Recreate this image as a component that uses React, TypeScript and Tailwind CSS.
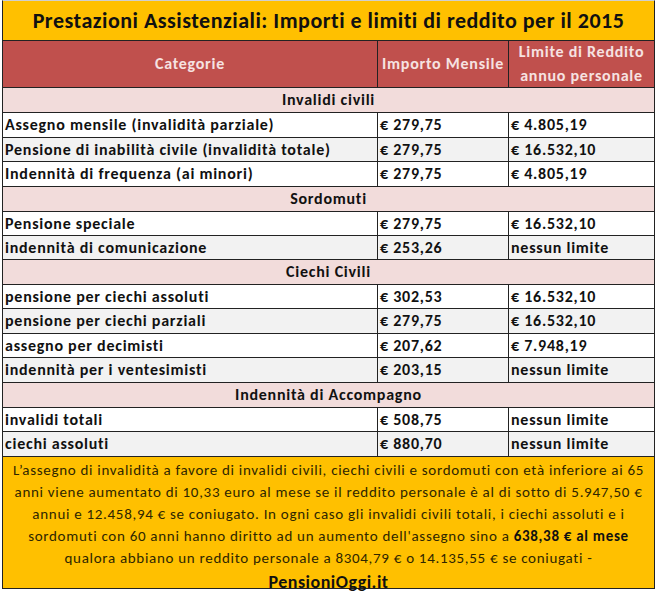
import React from "react";

type Row =
  | { kind: "section"; label: string; h: number }
  | { kind: "data"; a: string; b: string; c: string; h: number; gray: boolean };

const rows: Row[] = [
  { kind: "section", label: "Invalidi civili", h: 24 },
  { kind: "data", a: "Assegno mensile (invalidità parziale)", b: "€ 279,75", c: "€ 4.805,19", h: 24, gray: false },
  { kind: "data", a: "Pensione di inabilità civile (invalidità totale)", b: "€ 279,75", c: "€ 16.532,10", h: 23, gray: true },
  { kind: "data", a: "Indennità di frequenza (ai minori)", b: "€ 279,75", c: "€ 4.805,19", h: 24, gray: false },
  { kind: "section", label: "Sordomuti", h: 24 },
  { kind: "data", a: "Pensione speciale", b: "€ 279,75", c: "€ 16.532,10", h: 23, gray: false },
  { kind: "data", a: "indennità di comunicazione", b: "€ 253,26", c: "nessun limite", h: 23, gray: true },
  { kind: "section", label: "Ciechi Civili", h: 24 },
  { kind: "data", a: "pensione per ciechi assoluti", b: "€ 302,53", c: "€ 16.532,10", h: 23, gray: false },
  { kind: "data", a: "pensione per ciechi parziali", b: "€ 279,75", c: "€ 16.532,10", h: 24, gray: true },
  { kind: "data", a: "assegno per decimisti", b: "€ 207,62", c: "€ 7.948,19", h: 23, gray: false },
  { kind: "data", a: "indennità per i ventesimisti", b: "€ 203,15", c: "nessun limite", h: 24, gray: true },
  { kind: "section", label: "Indennità di Accompagno", h: 24 },
  { kind: "data", a: "invalidi totali", b: "€ 508,75", c: "nessun limite", h: 23, gray: false },
  { kind: "data", a: "ciechi assoluti", b: "€ 880,70", c: "nessun limite", h: 24, gray: true },
];

const font = { fontFamily: '"Carlito", "Lato", "Liberation Sans", sans-serif' };

export default function App() {
  return (
    <div className="w-[659px] h-[594px] bg-white pl-[2px]" style={font}>
      <div className="w-[653px] border-x border-b border-t border-x-[#222] border-b-[#222] border-t-[#cfcfcf] bg-white">
        <div className="h-[40px] bg-[#FFC000] border-b border-[#222] flex items-center justify-center text-[22px] tracking-[0.5px] font-bold text-[#111] leading-none">
          Prestazioni Assistenziali: Importi e limiti di reddito per il 2015
        </div>
        <div className="h-[47px] bg-[#C0504D] border-b border-[#222] flex text-[16px] tracking-[0.75px] font-bold text-[#F6E2E1] leading-[24px]">
          <div className="w-[375px] border-r border-[#222] flex items-center justify-center">Categorie</div>
          <div className="w-[131px] border-r border-[#222] flex items-center justify-center whitespace-nowrap">Importo Mensile</div>
          <div className="flex-1 flex flex-col items-center justify-center whitespace-nowrap">
            <span>Limite di Reddito</span>
            <span>annuo personale</span>
          </div>
        </div>
        {rows.map((r, i) =>
          r.kind === "section" ? (
            <div
              key={i}
              className="bg-[#F2DCDB] border-b border-[#222] flex items-center justify-center text-[16px] tracking-[0.75px] font-bold text-[#111]"
              style={{ height: r.h + 1 }}
            >
              {r.label}
            </div>
          ) : (
            <div
              key={i}
              className={`${r.gray ? "bg-[#F2F2F2]" : "bg-white"} border-b border-[#222] flex text-[16px] tracking-[0.75px] font-bold text-[#111]`}
              style={{ height: r.h + 1 }}
            >
              <div className="w-[375px] border-r border-[#222] flex items-center pl-[2px] whitespace-nowrap">{r.a}</div>
              <div className="w-[131px] border-r border-[#222] flex items-center pl-[2px] whitespace-nowrap">{r.b}</div>
              <div className="flex-1 flex items-center pl-[2px] whitespace-nowrap">{r.c}</div>
            </div>
          )
        )}
        <div className="h-[131px] bg-[#FFC000] flex flex-col items-center pt-[2px] text-[15px] tracking-[0.7px] leading-[22px] text-[#2e2600] whitespace-nowrap">
          <span>L’assegno di invalidità a favore di invalidi civili, ciechi civili e sordomuti con età inferiore ai 65</span>
          <span>anni viene aumentato di 10,33 euro al mese se il reddito personale è al di sotto di 5.947,50 €</span>
          <span>annui e 12.458,94 € se coniugato. In ogni caso gli invalidi civili totali, i ciechi assoluti e i</span>
          <span>
            sordomuti con 60 anni hanno diritto ad un aumento dell'assegno sino a <b className="text-[#111]">638,38 € al mese</b>
          </span>
          <span>qualora abbiano un reddito personale a 8304,79 € o 14.135,55 € se coniugati -</span>
          <span className="text-[18px] tracking-[0.5px] font-bold text-[#111] leading-[26px]">PensioniOggi.it</span>
        </div>
      </div>
    </div>
  );
}
